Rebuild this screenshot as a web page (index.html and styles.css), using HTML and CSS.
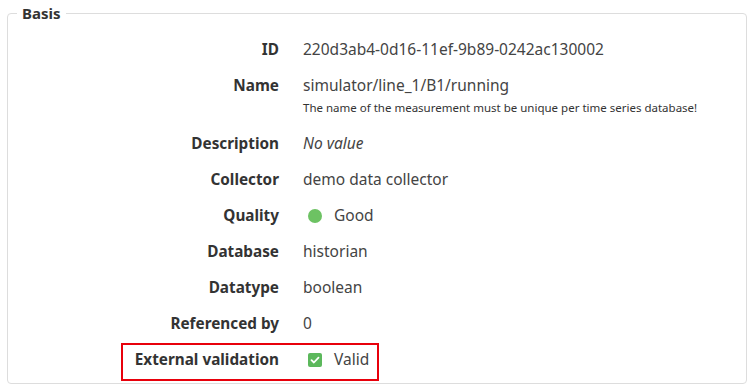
FILE: index.html
```html
<!DOCTYPE html>
<html lang="en">
<head>
  <meta charset="UTF-8">
  <meta name="viewport" content="width=device-width, initial-scale=1.0">
  <title>Measurement - Basis</title>
  <link rel="stylesheet" href="styles.css">
</head>
<body>
  <fieldset class="panel">
    <legend>Basis</legend>

    <div class="row">
      <div class="label">ID</div>
      <div class="value">220d3ab4-0d16-11ef-9b89-0242ac130002</div>
    </div>
    <div class="row">
      <div class="label">Name</div>
      <div class="value">
        simulator/line_1/B1/running
        <div class="hint">The name of the measurement must be unique per time series database!</div>
      </div>
    </div>
    <div class="row">
      <div class="label">Description</div>
      <div class="value empty">No value</div>
    </div>
    <div class="row">
      <div class="label">Collector</div>
      <div class="value">demo data collector</div>
    </div>
    <div class="row">
      <div class="label">Quality</div>
      <div class="value"><span class="dot"></span>Good</div>
    </div>
    <div class="row">
      <div class="label">Database</div>
      <div class="value">historian</div>
    </div>
    <div class="row">
      <div class="label">Datatype</div>
      <div class="value">boolean</div>
    </div>
    <div class="row">
      <div class="label">Referenced by</div>
      <div class="value">0</div>
    </div>
    <div class="row highlighted">
      <div class="label">External validation</div>
      <div class="value">
        <span class="check">
          <svg viewBox="0 0 14 14" width="14" height="14">
            <path d="M3.5 7.2l2.4 2.3 4.6-4.8" fill="none" stroke="#fff" stroke-width="1.8" stroke-linecap="round" stroke-linejoin="round"/>
          </svg>
        </span>Valid
      </div>
      <div class="marker"></div>
    </div>
  </fieldset>
</body>
</html>
```

FILE: styles.css
```css
body {
  margin: 0;
  padding: 5px 9px 7px 7px;
  font-family: "Noto Sans", sans-serif;
  background-color: #fff;
  color: #444;
}
.panel {
  margin: 0;
  padding: 0 0 6px 0;
  border: 1px solid #ddd;
  border-radius: 4px;
  min-width: 0;
}
.panel legend {
  margin-left: 9px;
  padding: 0 5px;
  font-size: 15px;
  font-weight: 700;
  color: #333;
  line-height: 16px;
}
.row {
  display: flex;
  align-items: flex-start;
  padding: 8px 0;
  line-height: 20px;
  font-size: 15px;
  position: relative;
}
.row:first-of-type {
  margin-top: 10px;
}
.label {
  width: 271px;
  flex-shrink: 0;
  text-align: right;
  font-weight: 700;
  color: #333;
  font-size: 15.3px;
}
.value {
  padding-left: 24px;
  color: #444;
  font-size: 15.5px;
}
.value.empty {
  font-style: italic;
}
.hint {
  margin-top: 4px;
  font-size: 11.5px;
  line-height: 18px;
  color: #333;
}
.dot {
  display: inline-block;
  width: 14px;
  height: 14px;
  border-radius: 50%;
  background-color: #6dc263;
  margin: 0 12px 0 5px;
  vertical-align: -2px;
}
.check {
  display: inline-flex;
  width: 14px;
  height: 14px;
  border-radius: 2px;
  background-color: #5cb85c;
  margin: 0 12px 0 5px;
  vertical-align: -2px;
}
.marker {
  position: absolute;
  left: 113px;
  top: 2px;
  width: 258px;
  height: 38px;
  border: 2px solid #e8000b;
  box-sizing: border-box;
}
```
